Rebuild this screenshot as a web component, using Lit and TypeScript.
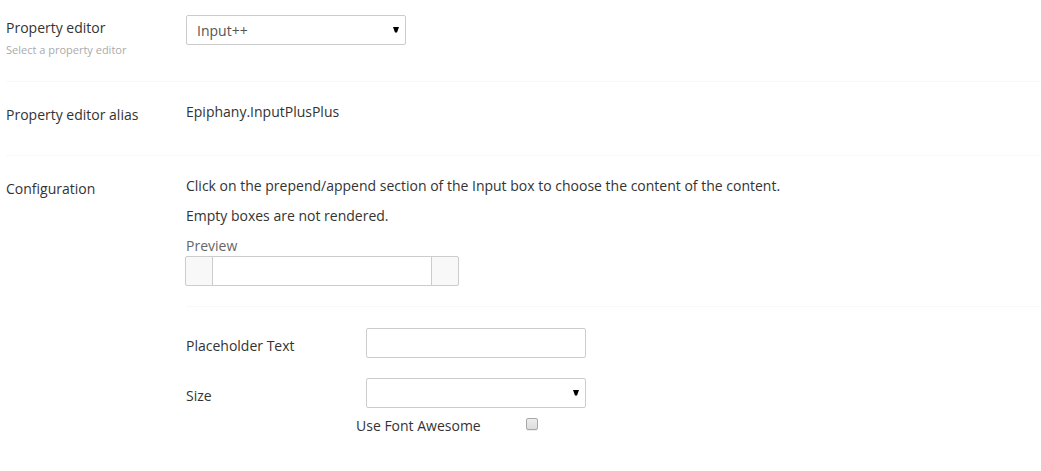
import { LitElement, html, css } from "lit";
import { customElement } from "lit/decorators.js";

const arrow = html`<svg class="arrow" viewBox="0 0 6 6" aria-hidden="true">
  <path d="M0 0h6L4 5.5H2z" />
</svg>`;

@customElement("app-root")
export class AppRoot extends LitElement {
  static styles = css`
    :host {
      display: block;
      padding: 15px 0 20px 6px;
      background: #fff;
      color: #333;
      font: 14px/20px "Open Sans", sans-serif;
    }
    * {
      box-sizing: border-box;
    }
    .group {
      display: grid;
      grid-template-columns: 160px minmax(0, 1fr);
      column-gap: 20px;
      padding-bottom: 20px;
      margin-bottom: 20px;
      border-bottom: 1px solid #f8f8f8;
    }
    .group:last-child {
      border-bottom: 0;
      padding-bottom: 0;
      margin-bottom: 0;
    }
    .name {
      padding-top: 3px;
    }
    .name.spaced {
      padding-bottom: 10px;
    }
    .name label {
      display: block;
    }
    .help {
      display: block;
      font-size: 11px;
      line-height: 23px;
      color: #aaa;
    }
    p {
      margin: 0 0 10px;
    }
    .field {
      display: block;
      width: 220px;
      height: 30px;
      margin: 0;
      padding: 4px 6px;
      border: 1px solid #ccc;
      border-radius: 2px;
      background: #fff;
      color: #555;
      font: inherit;
    }
    select.field {
      appearance: none;
      padding: 5px 20px 3px 10px;
    }
    .select {
      display: grid;
      width: 220px;
      align-items: center;
    }
    .select > * {
      grid-area: 1 / 1;
    }
    .arrow {
      width: 6px;
      height: 6px;
      justify-self: end;
      margin-right: 7px;
      pointer-events: none;
    }
    .preview-label {
      display: block;
      color: #666;
    }
    .preview {
      display: flex;
      margin-left: -1px;
    }
    .preview .field {
      border-radius: 0;
      margin: 0 -1px;
    }
    .addon {
      width: 28px;
      height: 30px;
      padding: 0;
      border: 1px solid #ccc;
      border-radius: 2px 0 0 2px;
      background: #f8f8f8;
    }
    .addon.append {
      border-radius: 0 2px 2px 0;
    }
    .settings {
      display: grid;
      grid-template-columns: 160px minmax(0, 1fr);
      gap: 20px;
      margin-top: 20px;
      padding-top: 21px;
      border-top: 1px solid #f8f8f8;
    }
    .settings label {
      padding-top: 8px;
    }
    .check {
      display: flex;
      padding: 8px 0 0 170px;
    }
    .check label {
      width: 170px;
    }
    .check input {
      appearance: none;
      width: 12px;
      height: 12px;
      margin: 2px 0 0;
      border: 1px solid #a8a8a8;
      border-radius: 2px;
      background: linear-gradient(#ededed, #dcdcdc);
      box-shadow: 0 1px 0 #eee;
    }
    .check input:checked {
      background: #555;
    }
  `;

  render() {
    return html`
      <div class="group">
        <div class="name">
          <label for="editor">Property editor</label>
          <small class="help" id="editor-help">Select a property editor</small>
        </div>
        <div>
          <div class="select">
            <select class="field" id="editor" aria-describedby="editor-help">
              <option>Input++</option>
            </select>
            ${arrow}
          </div>
        </div>
      </div>
      <div class="group">
        <div class="name spaced">Property editor alias</div>
        <div>Epiphany.InputPlusPlus</div>
      </div>
      <div class="group">
        <div class="name">Configuration</div>
        <div>
          <p>Click on the prepend/append section of the Input box to choose the content of the content.</p>
          <p>Empty boxes are not rendered.</p>
          <label class="preview-label" for="preview">Preview</label>
          <div class="preview">
            <button class="addon" type="button" aria-label="Prepend"></button>
            <input class="field" id="preview" type="text" />
            <button class="addon append" type="button" aria-label="Append"></button>
          </div>
          <div class="settings">
            <label for="placeholder">Placeholder Text</label>
            <input class="field" id="placeholder" type="text" />
            <label for="size">Size</label>
            <div class="select">
              <select class="field" id="size">
                <option></option>
              </select>
              ${arrow}
            </div>
          </div>
          <div class="check">
            <label for="awesome">Use Font Awesome</label>
            <input id="awesome" type="checkbox" />
          </div>
        </div>
      </div>
    `;
  }
}
